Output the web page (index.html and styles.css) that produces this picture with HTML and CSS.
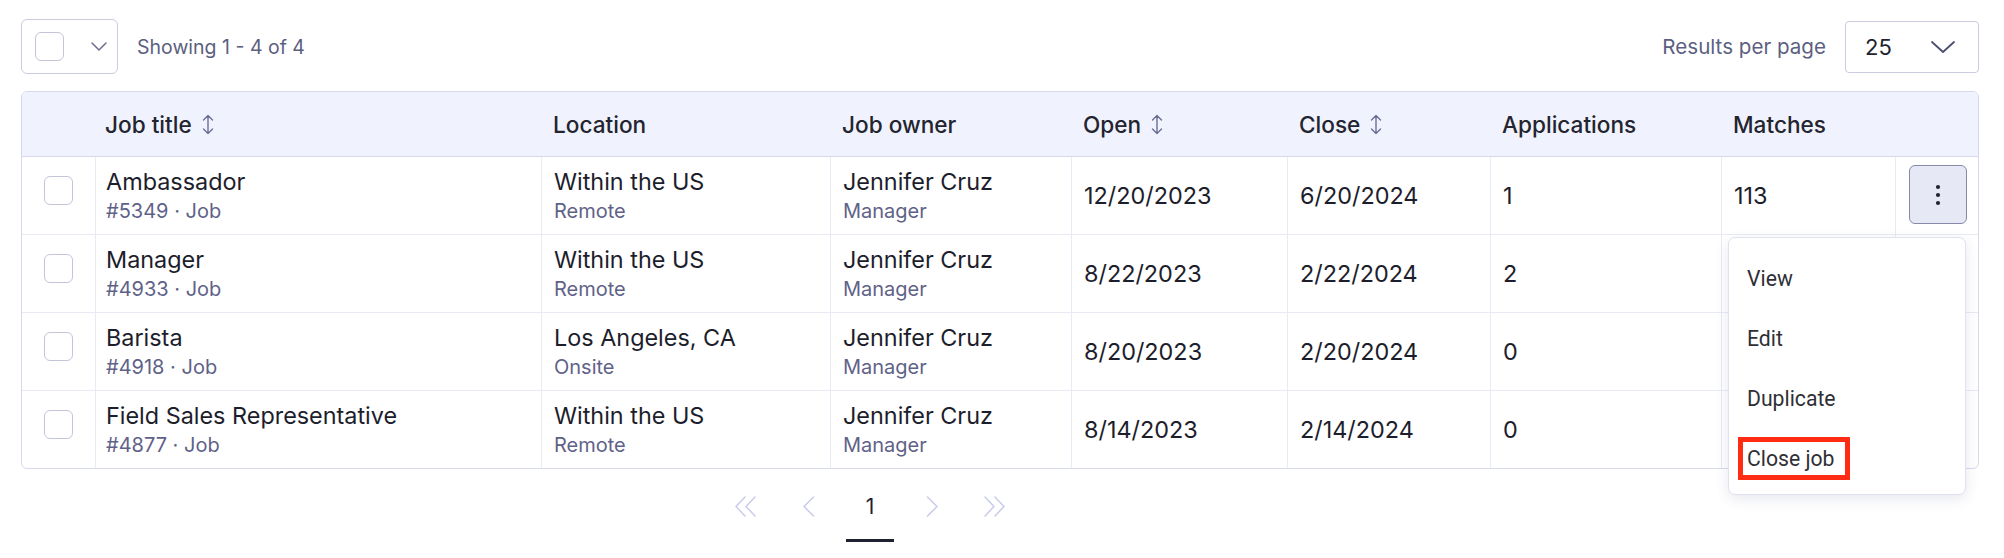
FILE: index.html
```html
<!DOCTYPE html>
<html lang="en">
<head>
<meta charset="utf-8">
<title>Jobs</title>
<link rel="stylesheet" href="styles.css">
</head>
<body>
<div class="page">
  <div class="toolbar">
    <div class="toolbar-left">
      <div class="bulk-select">
        <span class="checkbox"></span>
        <svg class="chev-sm" width="16" height="9" viewBox="0 0 16 9"><path d="M1 1l7 7 7-7" fill="none" stroke="#6a6d8e" stroke-width="1.5" stroke-linecap="round" stroke-linejoin="round"/></svg>
      </div>
      <span class="muted muted-left">Showing 1 - 4 of 4</span>
    </div>
    <div class="toolbar-right">
      <span class="muted muted-right">Results per page</span>
      <div class="per-page">
        <span>25</span>
        <svg width="24" height="12" viewBox="0 0 24 12"><path d="M1 1l11 10 11-10" fill="none" stroke="#4b4e70" stroke-width="1.8" stroke-linecap="round" stroke-linejoin="round"/></svg>
      </div>
    </div>
  </div>

  <div class="table-wrap">
    <table class="jobs">
      <colgroup>
        <col class="c-check"><col class="c-title"><col class="c-loc"><col class="c-owner"><col class="c-open"><col class="c-close"><col class="c-apps"><col class="c-match"><col class="c-act">
      </colgroup>
      <thead>
        <tr>
          <th></th>
          <th><span class="th-sort">Job title <svg class="sort" width="12" height="21" viewBox="0 0 12 21"><path d="M6 1.5v18M1.5 6L6 1.5 10.5 6M1.5 15L6 19.5 10.5 15" fill="none" stroke="#6b6e93" stroke-width="1.4" stroke-linecap="round" stroke-linejoin="round"/></svg></span></th>
          <th>Location</th>
          <th>Job owner</th>
          <th><span class="th-sort">Open <svg class="sort" width="12" height="21" viewBox="0 0 12 21"><path d="M6 1.5v18M1.5 6L6 1.5 10.5 6M1.5 15L6 19.5 10.5 15" fill="none" stroke="#6b6e93" stroke-width="1.4" stroke-linecap="round" stroke-linejoin="round"/></svg></span></th>
          <th><span class="th-sort">Close <svg class="sort" width="12" height="21" viewBox="0 0 12 21"><path d="M6 1.5v18M1.5 6L6 1.5 10.5 6M1.5 15L6 19.5 10.5 15" fill="none" stroke="#6b6e93" stroke-width="1.4" stroke-linecap="round" stroke-linejoin="round"/></svg></span></th>
          <th>Applications</th>
          <th>Matches</th>
          <th></th>
        </tr>
      </thead>
      <tbody>
        <tr>
          <td class="cell-check"><span class="checkbox"></span></td>
          <td><div class="main">Ambassador</div><div class="sub">#5349 · Job</div></td>
          <td><div class="main">Within the US</div><div class="sub">Remote</div></td>
          <td><div class="main">Jennifer Cruz</div><div class="sub">Manager</div></td>
          <td>12/20/2023</td>
          <td>6/20/2024</td>
          <td>1</td>
          <td>113</td>
          <td class="cell-act">
            <button class="kebab" type="button" aria-label="More actions">
              <svg width="6" height="22" viewBox="0 0 6 22"><circle cx="3" cy="3" r="2.1" fill="#23242f"/><circle cx="3" cy="11" r="2.1" fill="#23242f"/><circle cx="3" cy="19" r="2.1" fill="#23242f"/></svg>
            </button>
          </td>
        </tr>
        <tr>
          <td class="cell-check"><span class="checkbox"></span></td>
          <td><div class="main">Manager</div><div class="sub">#4933 · Job</div></td>
          <td><div class="main">Within the US</div><div class="sub">Remote</div></td>
          <td><div class="main">Jennifer Cruz</div><div class="sub">Manager</div></td>
          <td>8/22/2023</td>
          <td>2/22/2024</td>
          <td>2</td>
          <td></td>
          <td class="cell-act"></td>
        </tr>
        <tr>
          <td class="cell-check"><span class="checkbox"></span></td>
          <td><div class="main">Barista</div><div class="sub">#4918 · Job</div></td>
          <td><div class="main">Los Angeles, CA</div><div class="sub">Onsite</div></td>
          <td><div class="main">Jennifer Cruz</div><div class="sub">Manager</div></td>
          <td>8/20/2023</td>
          <td>2/20/2024</td>
          <td>0</td>
          <td></td>
          <td class="cell-act"></td>
        </tr>
        <tr>
          <td class="cell-check"><span class="checkbox"></span></td>
          <td><div class="main">Field Sales Representative</div><div class="sub">#4877 · Job</div></td>
          <td><div class="main">Within the US</div><div class="sub">Remote</div></td>
          <td><div class="main">Jennifer Cruz</div><div class="sub">Manager</div></td>
          <td>8/14/2023</td>
          <td>2/14/2024</td>
          <td>0</td>
          <td></td>
          <td class="cell-act"></td>
        </tr>
      </tbody>
    </table>

    <div class="menu" role="menu">
      <div class="menu-item">View</div>
      <div class="menu-item">Edit</div>
      <div class="menu-item">Duplicate</div>
      <div class="menu-item"><span class="highlight">Close job</span></div>
    </div>
  </div>

  <nav class="pager">
    <span class="pg-btn"><svg width="24" height="21" viewBox="0 0 24 21"><path d="M11 1L2 10.5 11 20M21 1L12 10.5 21 20" fill="none" stroke="#c8ccec" stroke-width="1.5" stroke-linecap="round" stroke-linejoin="round"/></svg></span>
    <span class="pg-btn"><svg width="13" height="21" viewBox="0 0 13 21"><path d="M11.5 1L2 10.5 11.5 20" fill="none" stroke="#c8ccec" stroke-width="1.5" stroke-linecap="round" stroke-linejoin="round"/></svg></span>
    <span class="pg-btn pg-current">1</span>
    <span class="pg-btn"><svg width="13" height="21" viewBox="0 0 13 21"><path d="M1.5 1L11 10.5 1.5 20" fill="none" stroke="#c8ccec" stroke-width="1.5" stroke-linecap="round" stroke-linejoin="round"/></svg></span>
    <span class="pg-btn"><svg width="24" height="21" viewBox="0 0 24 21"><path d="M3 1L12 10.5 3 20M13 1L22 10.5 13 20" fill="none" stroke="#c8ccec" stroke-width="1.5" stroke-linecap="round" stroke-linejoin="round"/></svg></span>
  </nav>
</div>
</body>
</html>
```

FILE: styles.css
```css
* { box-sizing: border-box; }

html, body {
  margin: 0;
  background: #ffffff;
}

body {
  font-family: Inter, "Noto Sans", sans-serif;
  color: #1d1e2c;
}

.page {
  padding: 19px 25px 0 21px;
}

/* toolbar */
.toolbar {
  display: flex;
  align-items: center;
  justify-content: space-between;
  height: 55px;
}

.toolbar-left,
.toolbar-right {
  display: flex;
  align-items: center;
  gap: 19px;
}

.muted {
  color: #5c5f80;
}

.muted-left { font-size: 19.5px; }
.muted-right { font-size: 20.6px; }

.bulk-select {
  width: 97px;
  height: 55px;
  border: 1px solid #cacce0;
  border-radius: 6px;
  display: flex;
  align-items: center;
  padding-left: 13px;
  gap: 27px;
}

.checkbox {
  display: inline-block;
  width: 29px;
  height: 29px;
  border: 1.5px solid #c3c5d8;
  border-radius: 6px;
  background: #fff;
}

.per-page {
  width: 134px;
  height: 52px;
  border: 1px solid #cacce0;
  border-radius: 4px;
  display: flex;
  align-items: center;
  justify-content: space-between;
  padding: 0 23px 0 19px;
  font-size: 22px;
  color: #22232f;
}

/* table */
.table-wrap {
  position: relative;
  margin-top: 17px;
  border: 1px solid #d6d9ee;
  border-radius: 6px;
}

.jobs {
  width: 100%;
  border-collapse: separate;
  border-spacing: 0;
  table-layout: fixed;
}

.c-check { width: 73px; }
.c-title { width: 446px; }
.c-loc { width: 289px; }
.c-owner { width: 241px; }
.c-open { width: 216px; }
.c-close { width: 203px; }
.c-apps { width: 231px; }
.c-match { width: 174px; }
.c-act { width: 83px; }

.jobs th {
  height: 65px;
  background: #f0f3fd;
  border-bottom: 1px solid #d6d9ee;
  text-align: left;
  font-weight: 500;
  font-size: 22.6px;
  color: #23242f;
  padding: 0 12px;
  white-space: nowrap;
}

.jobs thead th:nth-child(2) { padding-left: 10px; }
.jobs thead th:first-child { border-top-left-radius: 5px; }
.jobs thead th:last-child { border-top-right-radius: 5px; }

.th-sort {
  display: inline-flex;
  align-items: center;
  gap: 10px;
}

.sort { display: block; }

.jobs td {
  height: 77px;
  padding: 0 12px;
  font-size: 23.4px;
  color: #1d1e2c;
  vertical-align: middle;
  border-left: 1px solid #e8eaf4;
  white-space: nowrap;
}

.jobs td:nth-child(2) { padding-left: 10px; }

.jobs tbody tr + tr td {
  height: 78px;
  border-top: 1px solid #e8eaf4;
}

.jobs td.cell-check {
  border-left: none;
  text-align: center;
  vertical-align: top;
  padding: 19px 0 0;
}

.main {
  line-height: 30px;
}

.sub {
  font-size: 20px;
  line-height: 28px;
  color: #5f6288;
}

.jobs td.cell-act {
  padding: 0 0 0 13px;
  vertical-align: top;
}

.kebab {
  margin-top: 8px;
  width: 58px;
  height: 59px;
  border: 1px solid #868aa8;
  border-radius: 6px;
  background: #e6e8f6;
  display: flex;
  align-items: center;
  justify-content: center;
  padding: 0;
}

/* overflow menu */
.menu {
  position: absolute;
  top: 145px;
  right: 12px;
  width: 238px;
  height: 258px;
  background: #fff;
  border: 1px solid #e0e2ef;
  border-radius: 7px;
  box-shadow: 0 4px 14px rgba(60, 64, 120, 0.12);
  padding: 10px 0 8px;
  font-family: Roboto, "Noto Sans", sans-serif;
}

.menu-item {
  height: 60px;
  display: flex;
  align-items: center;
  padding-left: 18px;
  font-size: 21.2px;
  color: #2f3036;
}

.highlight {
  display: inline-block;
  border: 5px solid #ff2b12;
  padding: 0 10px 0 4px;
  margin-left: -9px;
  line-height: 33px;
}

/* pager */
.pager {
  display: flex;
  gap: 14px;
  margin-top: 17px;
  padding-left: 701px;
}

.pg-btn {
  width: 48px;
  height: 56px;
  display: flex;
  align-items: flex-start;
  justify-content: center;
  padding-top: 10px;
  font-size: 21px;
  line-height: 21px;
  color: #1f2030;
}

.pg-current {
  padding-top: 10px;
  border-bottom: 3px solid #1f2030;
}
```
